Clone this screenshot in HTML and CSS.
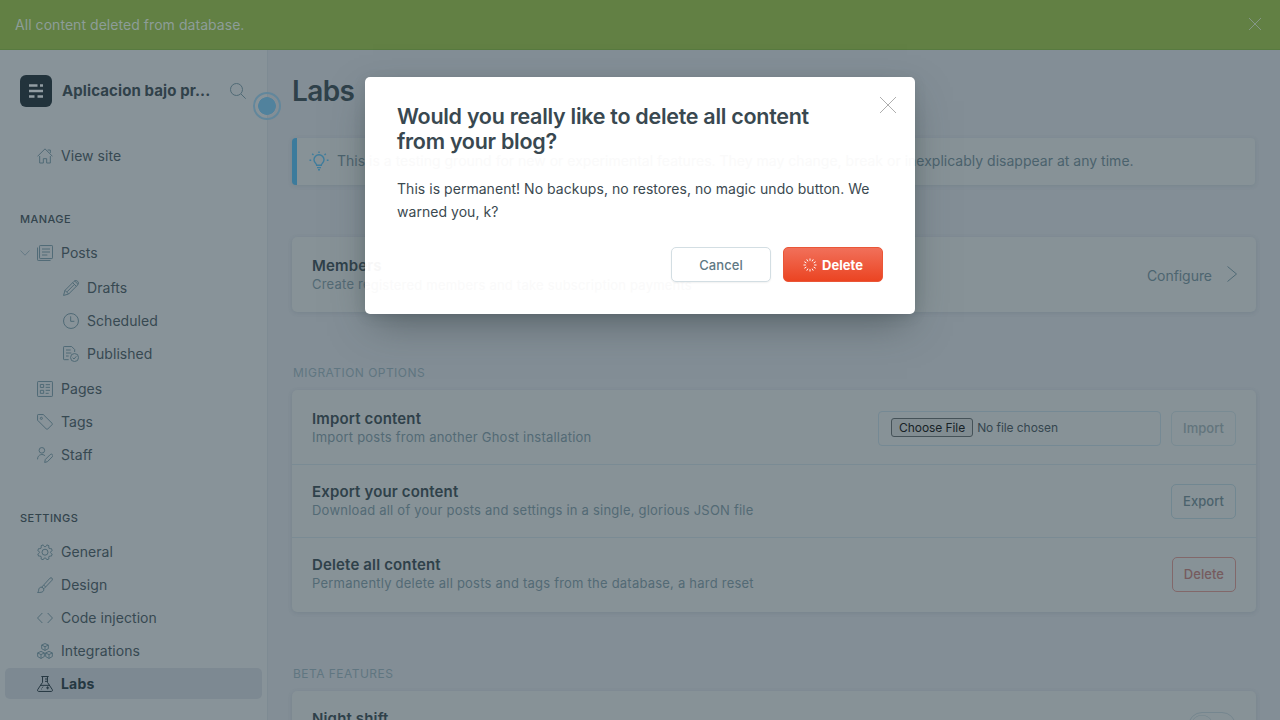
FILE: index.html
```html
<!DOCTYPE html>
<html lang="en">
<head>
<meta charset="utf-8">
<title>Labs</title>
<link rel="stylesheet" href="styles.css">
</head>
<body>
<div class="app">
  <header class="alert"><span>All content deleted from database.</span>
    <svg class="alert-close" viewBox="0 0 12 12"><path d="M0 0l12 12M12 0L0 12"/></svg>
  </header>
  <div class="view">
    <nav class="sidebar">
      <div class="brand">
        <svg class="logo" viewBox="0 0 32 32"><rect width="32" height="32" rx="6"/><path d="M9 10.500h8.500M20 10.500h3M9 16h14M9 21.500h5.500M17.500 21.500h5.500"/></svg>
        <span class="brand-name">Aplicacion bajo pr...</span>
        <svg class="search" viewBox="0 0 16 16"><circle cx="6.500" cy="6.500" r="6"/><path d="M11 11l4.700 4.700"/></svg>
      </div>
      <a class="item item-site"><svg class="ico" viewBox="0 0 24 24"><path d="M.8 12.500L12 1.300l11.200 11.200M4 12v10.500h5.500v-6.500h5v6.500H20V12M16 3h4v4.500"/></svg>View site</a>
      <h2 class="group">Manage</h2>
      <a class="item"><svg class="caret" viewBox="0 0 10 6"><path d="M.5.500L5 5.200 9.500.5"/></svg><svg class="ico" viewBox="0 0 24 24"><rect x="3.800" y=".8" width="19.500" height="19.500" rx="1"/><path d="M.8 3.800v18.400a1 1 0 0 0 1 1h18.500M7.500 6h12M7.500 10.500h12M7.500 15h8"/></svg>Posts</a>
      <div class="sub">
        <a class="item"><svg class="ico" viewBox="0 0 24 24"><path d="M.8 23.200L3 15.500 16.500 2a3.500 3.500 0 0 1 5.500 5.500L8.500 21zM3 15.500L8.500 21M14.500 4l5.500 5.500M17 6.700L6 17.800M17.500 1.500l5 5"/></svg>Drafts</a>
        <a class="item"><svg class="ico" viewBox="0 0 24 24"><circle cx="12" cy="12" r="11.200"/><path d="M11.500 5v7.500H17"/></svg>Scheduled</a>
        <a class="item"><svg class="ico" viewBox="0 0 24 24"><path d="M8.500 20.500H1.800a1 1 0 0 1-1-1V1.800a1 1 0 0 1 1-1H13l4.500 4.500V9M4.500 6h7M4.500 10.500h8M4.500 15h4"/><circle cx="17.300" cy="17.300" r="6"/><path d="M14.500 17.500l2 2 3.500-4"/></svg>Published</a>
      </div>
      <a class="item"><svg class="ico" viewBox="0 0 24 24"><rect x=".8" y=".8" width="22.400" height="22.400" rx="1"/><path d="M5 5.200h5v4.500H5zM5 14h5v4.500H5zM13 5.500h6.500M13 9.500h6.500M13 14h6.500M13 18.500h4.500"/></svg>Pages</a>
      <a class="item"><svg class="ico" viewBox="0 0 24 24"><path d="M.8 1.800v7.500l13.400 13.400a1.200 1.200 0 0 0 1.700 0l6.900-6.900a1.200 1.200 0 0 0 0-1.700L9.400.8H1.800a1 1 0 0 0-1 1z"/><circle cx="6.500" cy="6.500" r="1.600"/></svg>Tags</a>
      <a class="item"><svg class="ico" viewBox="0 0 24 24"><circle cx="7.300" cy="5" r="4.200"/><path d="M.8 18.500c0-7.800 8.500-9 11.300-5M11.500 23.200l1-4.500 7.300-7.300a2.200 2.200 0 0 1 3.200 3.200L15.700 22z"/></svg>Staff</a>
      <h2 class="group group-settings">Settings</h2>
      <a class="item"><svg class="ico" viewBox="0 0 24 24"><path d="M9.800 2.600a2.400 2.400 0 0 0 4.400 0l.6-1.300 3.200 1.400-.4 1.600a2.200 2.200 0 0 0 2.300 2.600l1.700-.1 1.200 3.100-1.400.8a2.200 2.200 0 0 0 0 3.600l1.400.8-1.200 3.100-1.700-.1a2.200 2.200 0 0 0-2.300 2.600l.4 1.600-3.200 1.400-.6-1.300a2.400 2.400 0 0 0-4.400 0l-.6 1.300L6 22.300l.4-1.600a2.200 2.200 0 0 0-2.300-2.600l-1.700.1-1.200-3.100 1.400-.8a2.200 2.200 0 0 0 0-3.600l-1.400-.8 1.200-3.100 1.700.1a2.200 2.200 0 0 0 2.300-2.600L6 2.700l3.200-1.400z"/><circle cx="12" cy="12.300" r="4.500"/></svg>General</a>
      <a class="item"><svg class="ico" viewBox="0 0 24 24"><path d="M.8 23.200c2-1.400 1.400-3.200 2-5.300 1-3 4.500-3.400 6.300-1.500 2 2 1.300 5-1.500 6.200-2 .8-4.500.6-6.800.6M7 15.300L19.500 1.700c2-1.800 4.800.8 3.200 3L10.500 17.500M10 12l3 3"/></svg>Design</a>
      <a class="item"><svg class="ico" viewBox="0 0 24 24"><path d="M8 4.500L.8 12 8 19.500M16 4.500l7.200 7.500-7.200 7.500"/></svg>Code injection</a>
      <a class="item"><svg class="ico" viewBox="0 0 24 24"><path d="M12 .8l5 2.300v5.400l-5 2.700-5-2.700V3.100zM7 3.100l5 2.500 5-2.500M12 5.600v5.600M6 12.600l5 2.300v5.400L6 23.200l-5-2.900v-5.400zM1 14.900l5 2.500 5-2.500M6 17.400v5.800M18 12.600l5 2.300v5.400l-5 2.900-5-2.900v-5.400zM13 14.900l5 2.500 5-2.500M18 17.400v5.800"/></svg>Integrations</a>
      <a class="item active"><svg class="ico" viewBox="0 0 24 24"><path d="M6.500.8h11M8.300.8v8.700L1 20.500c-.7 1.500 0 2.700 1.700 2.700h18.600c1.700 0 2.400-1.200 1.700-2.700L15.700 9.500V.8M12 4.500h3.700M12 8h3.700M4.500 14h15M16 15.500v4.500M13.800 17.800h4.400M9 16l-1 1.500M6.500 19.500h1"/></svg>Labs</a>
      <i class="beacon"></i>
    </nav>
    <main class="main">
      <h1 class="title">Labs</h1>
      <div class="note"><svg class="bulb" viewBox="0 0 20 20"><path d="M7.700 14.200c0-1.500-2.700-2.500-2.700-5.400a5 5 0 0 1 10 0c0 2.900-2.700 3.900-2.700 5.400zM8 16.600h4M9 18.800h2M10 .5V2M3.200 2.700l1.300 1.300M16.800 2.700L15.500 4M.5 9.200h1.700M17.800 9.200h1.700"/></svg>
        <span>This is a testing ground for new or experimental features. They may change, break or inexplicably disappear at any time.</span></div>
      <section class="card members">
        <div class="row"><div class="desc"><h3>Members</h3><p>Create registered members and take subscription payments</p></div>
        <span class="configure">Configure</span><svg class="next" viewBox="0 0 10 16"><path d="M.5.500L9.500 8 .5 15.500"/></svg></div>
      </section>
      <h2 class="section">Migration options</h2>
      <section class="card">
        <div class="row"><div class="desc"><h3>Import content</h3><p>Import posts from another Ghost installation</p></div>
          <div class="file"><span class="choose">Choose File</span><span>No file chosen</span></div><span class="btn disabled">Import</span></div>
        <div class="row"><div class="desc"><h3>Export your content</h3><p>Download all of your posts and settings in a single, glorious JSON file</p></div><span class="btn">Export</span></div>
        <div class="row"><div class="desc"><h3>Delete all content</h3><p>Permanently delete all posts and tags from the database, a hard reset</p></div><span class="btn danger">Delete</span></div>
      </section>
      <h2 class="section section-beta">Beta features</h2>
      <section class="card beta">
        <div class="row"><div class="desc"><h3>Night shift</h3></div><span class="toggle"></span></div>
      </section>
    </main>
  </div>
  <div class="modal">
    <div class="fade" aria-hidden="true">
      <span class="fade-note">This is a testing ground for new or experimental features. They may change, break or inexplicably disappear at any time.</span>
      <b class="fade-title">Members</b>
      <span class="fade-desc">Create registered members and take subscription payments</span>
    </div>
    <div class="modal-head"><h1>Would you really like to delete all content from your blog?</h1>
      <svg class="modal-close" viewBox="0 0 16 16"><path d="M0 0l16 16M16 0L0 16"/></svg></div>
    <p>This is permanent! No backups, no restores, no magic undo button. We warned you, k?</p>
    <div class="actions"><span class="cancel">Cancel</span>
      <span class="delete"><svg class="spin" viewBox="-7 -7 14 14"><path d="M0-6.500v2.300M0 6.500V4.200M-6.500 0h2.300M6.500 0H4.200M3.250-5.630L2.100-3.640M5.630-3.250L3.640-2.100M5.630 3.250L3.640 2.100M3.250 5.630L2.100 3.640M-3.250 5.630L-2.100 3.640M-5.630 3.250L-3.640 2.100M-5.630-3.250L-3.640-2.100M-3.250-5.630L-2.100-3.640"/></svg>Delete</span></div>
  </div>
</div>
</body>
</html>
```
FILE: styles.css
```css
* { box-sizing: border-box; }
body { margin: 0; font-family: Inter, "Liberation Sans", sans-serif; font-size: 14px; letter-spacing: .05px; color: #35464f; }
h1, h2, h3, p { margin: 0; }
svg { fill: none; stroke: #506a76; flex: none; }
.app { position: relative; width: 1280px; height: 720px; overflow: hidden; display: flex; flex-direction: column; background: #838e96; }
.alert { height: 50px; flex: none; display: flex; align-items: center; justify-content: space-between; padding: 0 19px 0 15px; background: #628044; border-bottom: 1px solid #587a40; color: #8d9d98; }
.alert-close { width: 12px; height: 12px; margin-bottom: 1px; stroke: #8d9d98; overflow: visible; stroke-width: .8; }
.view { flex: 1; min-height: 0; display: flex; }
.sidebar { position: relative; width: 268px; flex: none; background: #889399; border-right: 1px solid #7e8b93; padding: 25px 5px 0; }
.brand { display: flex; align-items: center; height: 32px; padding: 0 16px 0 15px; }
.logo { width: 32px; height: 32px; stroke: #929da3; stroke-width: 2.600; }
.logo rect { fill: #22333c; stroke: none; }
.brand-name { flex: 1; margin-left: 10px; padding-bottom: 2px; font-size: 15px; font-weight: 700; letter-spacing: .1px; white-space: nowrap; color: #30414a; }
.search { width: 16px; height: 16px; }
.item { display: flex; align-items: center; height: 33px; padding-left: 32px; color: #374952; position: relative; }
.ico { width: 16px; height: 16px; stroke-width: 1.500; margin-right: 8px; stroke-linejoin: round; }
.item-site { margin-top: 32px; }
.group { font-size: 11px; line-height: 16px; font-weight: 500; text-transform: uppercase; padding-left: 15px; margin: 39px 0 9px; letter-spacing: .45px; color: #33444d; }
.caret { width: 10px; height: 6px; position: absolute; left: 15px; top: 14px; stroke: #667b86; }
.sub { margin: 2px 0; padding-left: 26px; }
.active { height: 31px; margin-top: 1px; border-radius: 5px; background: #7d8992; font-weight: 700; letter-spacing: .2px; color: #263842; }
.active .ico { stroke: #263842; }
.beacon { position: absolute; left: 253px; top: 42px; width: 28px; height: 28px; border-radius: 50%; border: 2px solid #62879c; background: radial-gradient(circle, #51829d 0 8.500px, transparent 9.200px); }
.main { flex: 1; min-width: 0; padding: 0 24px; }
.title { font-size: 28px; line-height: 34px; font-weight: 600; padding-top: 24px; color: #2f414a; letter-spacing: -.6px; }
.note { display: flex; align-items: center; height: 47px; width: 963px; margin-top: 30px; padding: 0 0 2px 12px; border-left: 5px solid #3c7b9c; border-radius: 4px; background: #879297; color: #4b626d; box-shadow: 0 1px 4px rgba(60,85,98,.16); white-space: nowrap; letter-spacing: .01px; }
.bulb { width: 20px; height: 20px; stroke: #3f7d9d; stroke-width: 1.400; margin-right: 8px; }
.card { background: #879297; border-radius: 5px; box-shadow: 0 1px 4px rgba(60,85,98,.18); }
.members { margin-top: 52px; }
.row { display: flex; align-items: center; height: 73px; padding: 0 20px; border-top: 1px solid #7a8b94; }
.row:first-child { height: 75px; border-top-color: transparent; }
.card:not(.members) .row:first-child { height: 74px; }
.card:not(.members) .row:last-child { height: 75px; padding-bottom: 2px; }
.desc { flex: 1; padding-bottom: 1px; }
.members .desc { padding-bottom: 1px; }
.desc h3 { font-size: 15px; line-height: 20px; font-weight: 600; letter-spacing: .15px; color: #2f414a; }
.desc p { font-size: 13px; line-height: 17px; letter-spacing: .22px; color: #536a75; }
.configure { color: #4d6570; letter-spacing: -.05px; }
.next { width: 10px; height: 16px; margin: 0 -1px 2px 15px; }
.section { font-size: 12px; line-height: 16px; font-weight: 400; text-transform: uppercase; letter-spacing: .46px; margin: 53px 0 9px 1px; color: #607681; }
.section-beta { margin-top: 54px; }
.card.beta .row:last-child { align-items: flex-start; padding: 17px 20px 0; }
.file { display: flex; align-items: center; width: 283px; height: 35px; margin-top: 2px; padding: 0 12px 2px; border: 1px solid #758994; border-radius: 4px; font-size: 12px; letter-spacing: -.07px; color: #35464f; }
.choose { height: 19px; line-height: 17px; padding: 0 7px; margin-right: 4px; border: 1px solid #455258; border-radius: 3px; background: #818c91; color: #172227; }
.btn { height: 35px; line-height: 33px; padding: 0 11px; margin-left: 10px; border: 1px solid #718791; border-radius: 5px; font-size: 13px; font-weight: 500; color: #4b626c; }
.disabled { opacity: .6; margin-top: 2px; }
.danger { border-color: #82686a; color: #765b5e; }
.toggle { width: 48px; height: 28px; margin-top: 3px; border: 1px solid #75868f; border-radius: 14px; background: radial-gradient(circle at 13px 13px, transparent 10px, #7b8a91 10.500px 11px, transparent 11.500px); }
.modal { position: absolute; left: 365px; top: 77px; width: 550px; height: 237px; padding: 27px 32px 32px; border-radius: 5px; background: #fff; box-shadow: 0 16px 38px -8px rgba(55,65,70,.55), 0 3px 12px rgba(55,70,80,.18); }
.fade { position: absolute; inset: 0; overflow: hidden; white-space: nowrap; color: #fafafa; }
.fade span, .fade b { position: absolute; line-height: 20px; }
.fade-note { left: -28px; top: 74px; letter-spacing: .01px; }
.fade-title { left: -53px; top: 179px; font-size: 15px; font-weight: 600; letter-spacing: .15px; color: #f7f7f7; }
.fade-desc { left: -53px; top: 198px; font-size: 13px; letter-spacing: .22px; }
.modal-head { position: relative; display: flex; justify-content: space-between; }
.modal h1 { width: 430px; font-size: 21.500px; line-height: 25px; font-weight: 600; letter-spacing: -.28px; color: #394850; }
.modal-close { width: 16px; height: 16px; margin: -7px -13px 0 0; margin: -7px -13px 0 0; margin-top: -7px; margin-top: 0; margin-top: -7px; stroke: #999; stroke-width: .8; overflow: visible; }
.modal p { position: relative; margin-top: 23px; line-height: 23px; letter-spacing: .04px; color: #3b4950; }
.actions { position: relative; display: flex; justify-content: flex-end; gap: 12px; margin-top: 24px; }
.cancel, .delete { display: flex; align-items: center; justify-content: center; width: 100px; height: 35px; border-radius: 5px; font-size: 13px; }
.cancel { border: 1px solid #d3dee3; color: #607883; font-weight: 500; background: #fff; box-shadow: 0 1px 2px rgba(0,0,0,.06); }
.delete { color: #fff; font-weight: 700; background: linear-gradient(#f1705a, #eb4422); border: 1px solid #ea5637; }
.spin { width: 14px; height: 14px; stroke: #fff; stroke-width: 1; margin-right: 5px; }
```
